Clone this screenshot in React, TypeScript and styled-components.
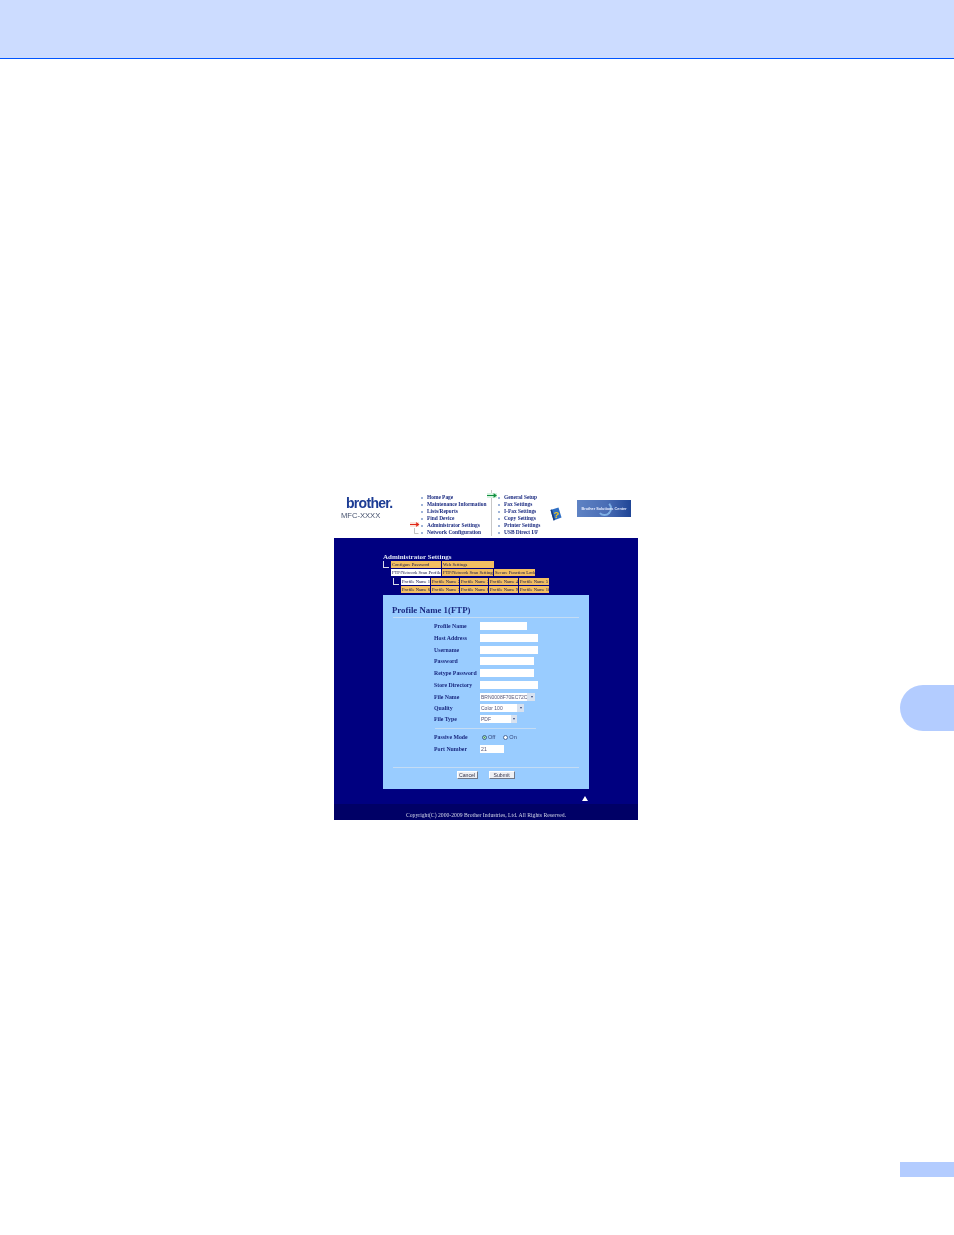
import React from 'react';
import styled, { createGlobalStyle } from 'styled-components';

const GlobalStyle = createGlobalStyle`
    html, body {
        margin: 0;
        padding: 0;
        background: #ffffff;
    }
`;

const leftMenu = ['Home Page', 'Maintenance Information', 'Lists/Reports', 'Find Device', 'Administrator Settings', 'Network Configuration'];
const rightMenu = ['General Setup', 'Fax Settings', 'I-Fax Settings', 'Copy Settings', 'Printer Settings', 'USB Direct I/F'];
const profilesTop = ['Profile Name 1', 'Profile Name 2', 'Profile Name 3', 'Profile Name 4', 'Profile Name 5'];
const profilesBottom = ['Profile Name 6', 'Profile Name 7', 'Profile Name 8', 'Profile Name 9', 'Profile Name 10'];
const profileWidths = [29, 28, 28, 29, 30];

function App() {
    return (
        <Page>
            <GlobalStyle />
            <TopBand />
            <Body>
                <Figure>
                    <DeviceHeader>
                        <LogoBox>
                            <Logo>brother.</Logo>
                            <Model>MFC-XXXX</Model>
                        </LogoBox>
                        <MenuLeft>
                            <ArrowColumn>
                                <svg width="10" height="14" viewBox="0 0 10 14">
                                    <rect x="0" y="0" width="9" height="5" fill="#fbe3dc" />
                                    <path d="M0 2.5h8.5M6 .8l2.5 1.7L6 4.2" stroke="#e02818" strokeWidth="1.1" fill="none" />
                                    <path d="M4.5 6v5.5h4" stroke="#a8a8a8" strokeWidth="0.7" fill="none" />
                                </svg>
                            </ArrowColumn>
                            <MenuList>
                                {leftMenu.map((item) => (
                                    <MenuItem key={item}>
                                        <Bullet />
                                        {item}
                                    </MenuItem>
                                ))}
                            </MenuList>
                        </MenuLeft>
                        <MenuRight>
                            <GreenArrow>
                                <svg width="10" height="5" viewBox="0 0 10 5">
                                    <rect x="0" y="0" width="10" height="5" fill="#d8f2e0" />
                                    <path d="M0 2.5h9M6.5 .8 9 2.5 6.5 4.2" stroke="#109040" strokeWidth="1.1" fill="none" />
                                </svg>
                            </GreenArrow>
                            <MenuList>
                                {rightMenu.map((item) => (
                                    <MenuItem key={item}>
                                        <Bullet />
                                        {item}
                                    </MenuItem>
                                ))}
                            </MenuList>
                        </MenuRight>
                        <HelpIcon>
                            <svg width="12" height="14" viewBox="0 0 12 14">
                                <path d="M0.5 3 8.5 .5 11.5 10.5 3.5 13.5z" fill="#2f6fc4" />
                                <path d="M0.5 3 2 2.5 5 13 3.5 13.5z" fill="#173c7c" />
                                <text x="3.6" y="10.6" fontSize="9.5" fontWeight="700" fontFamily="Liberation Sans, sans-serif" fill="#f4c820">?</text>
                            </svg>
                        </HelpIcon>
                        <Banner>
                            <BannerMark aria-hidden="true" />
                            <BannerText>Brother Solutions Center</BannerText>
                        </Banner>
                    </DeviceHeader>
                    <Navy>
                        <SectionTitle>Administrator Settings</SectionTitle>
                        <TabBlock>
                            <Elbow />
                            <div>
                                <TabRow>
                                    <Tab $w={50}>Configure Password</Tab>
                                    <Tab $w={52}>Web Settings</Tab>
                                </TabRow>
                                <TabRow>
                                    <Tab $w={50} $active>FTP/Network Scan Profile</Tab>
                                    <Tab $w={51}>FTP/Network Scan Settings</Tab>
                                    <Tab $w={41}>Secure Function Lock</Tab>
                                </TabRow>
                            </div>
                        </TabBlock>
                        <SubTabBlock>
                            <Elbow />
                            <div>
                                <TabRow>
                                    {profilesTop.map((p, i) => (
                                        <Tab key={p} $w={profileWidths[i]} $active={i === 0}>{p}</Tab>
                                    ))}
                                </TabRow>
                                <TabRow>
                                    {profilesBottom.map((p, i) => (
                                        <Tab key={p} $w={profileWidths[i]}>{p}</Tab>
                                    ))}
                                </TabRow>
                            </div>
                        </SubTabBlock>
                        <Panel>
                            <PanelTitle>Profile Name 1(FTP)</PanelTitle>
                            <Rule />
                            <Form>
                                <Field><Label>Profile Name</Label><TextBox $w={47} /></Field>
                                <Field><Label>Host Address</Label><TextBox $w={58} /></Field>
                                <Field><Label>Username</Label><TextBox $w={58} /></Field>
                                <Field><Label>Password</Label><TextBox $w={54} /></Field>
                                <Field><Label>Retype Password</Label><TextBox $w={54} /></Field>
                                <Field><Label>Store Directory</Label><TextBox $w={58} /></Field>
                                <SelectField><Label>File Name</Label><Select $w={55}>BRN0008F70EC72C<Caret /></Select></SelectField>
                                <SelectField><Label>Quality</Label><Select $w={44}>Color 100<Caret /></Select></SelectField>
                                <SelectField><Label>File Type</Label><Select $w={37}>PDF<Caret /></Select></SelectField>
                            </Form>
                            <ShortRule />
                            <Field>
                                <Label>Passive Mode</Label>
                                <Radios>
                                    <Radio $on />Off
                                    <RadioGap />
                                    <Radio />On
                                </Radios>
                            </Field>
                            <PortField><Label>Port Number</Label><TextBox $w={24}>21</TextBox></PortField>
                            <BottomRule />
                            <Buttons>
                                <Button $w={21}>Cancel</Button>
                                <Button $w={26}>Submit</Button>
                            </Buttons>
                        </Panel>
                        <TopLink>
                            <svg width="6" height="5" viewBox="0 0 6 5"><path d="M3 0 6 5H0z" fill="#ffffff" /></svg>
                        </TopLink>
                    </Navy>
                    <Copyright>Copyright(C) 2000-2009 Brother Industries, Ltd. All Rights Reserved.</Copyright>
                </Figure>
                <SideColumn>
                    <ChapterTab />
                    <PageTab />
                </SideColumn>
            </Body>
        </Page>
    );
}

const Page = styled.div`
    width: 954px;
    height: 1235px;
    overflow: hidden;
    background: #ffffff;
`;
const TopBand = styled.div`
    height: 58px;
    background: #ccdcff;
    border-bottom: 1px solid #0055ff;
`;
const Body = styled.div`
    display: flex;
    justify-content: space-between;
    padding: 431px 0 0 334px;
`;
const Figure = styled.div`
    width: 304px;
    height: 330px;
    display: flex;
    flex-direction: column;
    font-family: "Liberation Serif", serif;
    filter: blur(0.25px);
`;
const DeviceHeader = styled.div`
    height: 48px;
    display: flex;
    background: #ffffff;
`;
const LogoBox = styled.div`
    width: 76px;
    padding: 7px 0 0 7px;
    box-sizing: border-box;
`;
const Logo = styled.div`
    font-family: "Liberation Sans", sans-serif;
    font-weight: 700;
    font-size: 14px;
    line-height: 13px;
    letter-spacing: -0.7px;
    color: #1c3c94;
    padding-left: 5px;
`;
const Model = styled.div`
    font-family: "Liberation Sans", sans-serif;
    font-size: 7.6px;
    line-height: 9px;
    margin-top: 1px;
    color: #46526e;
`;
const MenuLeft = styled.div`
    width: 77px;
    display: flex;
    padding-top: 4px;
    box-sizing: border-box;
`;
const ArrowColumn = styled.div`
    width: 11px;
    height: 42px;
    display: flex;
    align-items: flex-end;
    line-height: 0;
`;
const MenuList = styled.div`
    display: flex;
    flex-direction: column;
`;
const MenuItem = styled.div`
    height: 7px;
    display: flex;
    align-items: center;
    font-size: 5.4px;
    font-weight: 700;
    line-height: 7px;
    white-space: nowrap;
    color: #1a2a80;
`;
const Bullet = styled.span`
    width: 2px;
    height: 2px;
    margin-right: 4px;
    background: #9fb4d8;
`;
const MenuRight = styled.div`
    width: 59px;
    height: 46px;
    margin-left: 4px;
    padding: 4px 0 0 6px;
    box-sizing: border-box;
    display: flex;
    position: relative;
    border-left: 1px solid #c8c8c8;
`;
const GreenArrow = styled.div`
    position: absolute;
    left: -5px;
    top: 3px;
    line-height: 0;
    background: #ffffff;
`;
const HelpIcon = styled.div`
    width: 27px;
    padding-top: 17px;
    box-sizing: border-box;
    line-height: 0;
`;
const Banner = styled.div`
    width: 54px;
    height: 17px;
    margin-top: 10px;
    position: relative;
    display: flex;
    align-items: center;
    justify-content: center;
    overflow: hidden;
    background: linear-gradient(90deg, #5f83c4 0%, #4a6db5 55%, #1f4596 100%);
`;
const BannerText = styled.span`
    position: relative;
    font-family: "Liberation Sans", sans-serif;
    font-weight: 700;
    font-size: 3.8px;
    white-space: nowrap;
    color: #e8eeff;
`;
const BannerMark = styled.span`
    position: absolute;
    left: 20px;
    top: 1px;
    width: 15px;
    height: 15px;
    box-sizing: border-box;
    border-radius: 50%;
    border: 2.5px solid #7fb0e6;
    border-left-color: transparent;
    border-top-color: transparent;
`;
const Navy = styled.div`
    height: 266px;
    display: flex;
    flex-direction: column;
    padding: 15px 49px 0;
    box-sizing: border-box;
    background: #000080;
`;
const SectionTitle = styled.div`
    font-size: 7px;
    font-weight: 700;
    line-height: 8px;
    white-space: nowrap;
    color: #dfe6f5;
`;
const TabBlock = styled.div`
    display: flex;
`;
const SubTabBlock = styled.div`
    display: flex;
    margin: 1px 0 0 10px;
`;
const Elbow = styled.div`
    width: 5px;
    height: 6px;
    margin-right: 2px;
    border-left: 1px solid #d8dcea;
    border-bottom: 1px solid #d8dcea;
`;
const TabRow = styled.div`
    display: flex;
    gap: 1px;
    height: 7px;
    margin-bottom: 1px;
`;
const Tab = styled.div<{ $w: number; $active?: boolean }>`
    width: ${(p) => p.$w}px;
    height: 7px;
    padding-left: 1px;
    box-sizing: border-box;
    overflow: hidden;
    font-size: 4.6px;
    line-height: 7px;
    white-space: nowrap;
    color: #10104a;
    background: ${(p) => (p.$active ? '#ffffff' : '#f3bf62')};
`;
const Panel = styled.div`
    width: 206px;
    height: 194px;
    margin-top: 1px;
    padding: 10px 10px 0;
    box-sizing: border-box;
    background: #99ccff;
`;
const PanelTitle = styled.div`
    margin-left: -1px;
    font-size: 8.8px;
    font-weight: 700;
    line-height: 10px;
    white-space: nowrap;
    color: #1a2a80;
`;
const Rule = styled.div`
    height: 1px;
    margin-top: 2px;
    background: #c4dcf4;
`;
const Form = styled.div`
    display: flex;
    flex-direction: column;
    margin-top: 3.5px;
`;
const Field = styled.div`
    display: flex;
    align-items: center;
    height: 9px;
    margin-bottom: 2.75px;
    padding-left: 41px;
`;
const SelectField = styled(Field)`
    margin-bottom: 2.2px;
`;
const PortField = styled(Field)`
    margin-top: 2px;
`;
const Label = styled.div`
    width: 46px;
    font-size: 5.8px;
    font-weight: 700;
    white-space: nowrap;
    color: #1a2a80;
`;
const TextBox = styled.div<{ $w: number }>`
    width: ${(p) => p.$w}px;
    height: 8px;
    padding-left: 1px;
    box-sizing: border-box;
    font-family: "Liberation Sans", sans-serif;
    font-size: 5.2px;
    line-height: 8px;
    color: #555577;
    background: #ffffff;
`;
const Select = styled.div<{ $w: number }>`
    width: ${(p) => p.$w}px;
    height: 8px;
    display: flex;
    justify-content: space-between;
    padding-left: 1px;
    box-sizing: border-box;
    overflow: hidden;
    font-family: "Liberation Sans", sans-serif;
    font-size: 5px;
    line-height: 8px;
    white-space: nowrap;
    color: #555577;
    background: linear-gradient(90deg, #ffffff 85%, #d8e2f0 85%);
`;
const Caret = styled.span`
    flex: none;
    width: 0;
    height: 0;
    margin: 3px 2px 0 0;
    border-left: 1.5px solid transparent;
    border-right: 1.5px solid transparent;
    border-top: 2px solid #33447a;
`;
const ShortRule = styled.div`
    width: 101px;
    height: 1px;
    margin: 2px 0 4px 42px;
    background: #c4dcf4;
`;
const Radios = styled.div`
    display: flex;
    align-items: center;
    font-family: "Liberation Sans", sans-serif;
    font-size: 5.6px;
    color: #33447a;
    padding-left: 2px;
`;
const Radio = styled.span<{ $on?: boolean }>`
    width: 5px;
    height: 5px;
    margin-right: 1px;
    box-sizing: border-box;
    border-radius: 50%;
    border: 1px solid #4a6a9a;
    background: ${(p) => (p.$on ? '#3aa050' : '#ffffff')};
    box-shadow: ${(p) => (p.$on ? 'inset 0 0 0 0.6px #ffffff' : 'none')};
`;
const RadioGap = styled.span`
    width: 8px;
`;
const BottomRule = styled.div`
    height: 1px;
    margin-top: 14px;
    background: #c4dcf4;
`;
const Buttons = styled.div`
    display: flex;
    justify-content: center;
    gap: 11px;
    margin-top: 3px;
    padding-right: 1px;
`;
const Button = styled.div<{ $w: number }>`
    width: ${(p) => p.$w}px;
    height: 8px;
    box-sizing: border-box;
    font-family: "Liberation Sans", sans-serif;
    font-size: 5.2px;
    line-height: 6.5px;
    text-align: center;
    color: #33334a;
    background: #eef0f4;
    border: 1px solid #707888;
    border-left-color: #ffffff;
    border-top-color: #ffffff;
`;
const TopLink = styled.div`
    display: flex;
    justify-content: flex-end;
    width: 206px;
    margin-top: 7px;
    padding-right: 1px;
    box-sizing: border-box;
    line-height: 0;
`;
const Copyright = styled.div`
    height: 16px;
    font-size: 5.7px;
    line-height: 23px;
    text-align: center;
    white-space: nowrap;
    overflow: hidden;
    color: #d0d4e8;
    background: #000066;
`;
const SideColumn = styled.div`
    width: 54px;
    display: flex;
    flex-direction: column;
`;
const ChapterTab = styled.div`
    height: 46px;
    margin-top: 195px;
    border-radius: 23px 0 0 23px;
    background: #b3ccff;
`;
const PageTab = styled.div`
    height: 15px;
    margin-top: 431px;
    background: #b3ccff;
`;

export default App;
